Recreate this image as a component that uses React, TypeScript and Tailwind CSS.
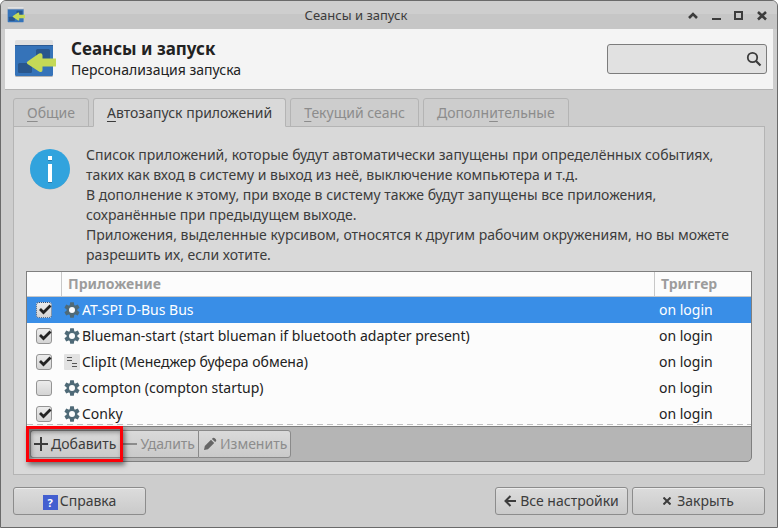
import clsx from "clsx"
import { useState } from "react"

type Entry = {
    name: string
    icon: "gear" | "list"
    enabled: boolean
    trigger: string
}

const initialEntries: Entry[] = [
    { name: "AT-SPI D-Bus Bus", icon: "gear", enabled: true, trigger: "on login" },
    { name: "Blueman-start (start blueman if bluetooth adapter present)", icon: "gear", enabled: true, trigger: "on login" },
    { name: "ClipIt (Менеджер буфера обмена)", icon: "list", enabled: true, trigger: "on login" },
    { name: "compton (compton startup)", icon: "gear", enabled: false, trigger: "on login" },
    { name: "Conky", icon: "gear", enabled: true, trigger: "on login" },
]

// [before, mnemonic, after]
const tabs = [
    ["", "О", "бщие"],
    ["", "А", "втозапуск приложений"],
    ["", "Т", "екущий сеанс"],
    ["Дополн", "и", "тельные"],
]

const SessionIcon = ({ className }: { className: string }) => (
    <svg viewBox="0 0 42 38" className={className} aria-hidden="true">
        <rect x="0" y="2" width="38" height="35" rx="1.5" fill="#b5b5b5" />
        <rect x="0" y="0" width="38" height="36" rx="1.5" fill="#e0e0e0" />
        <path d="M0 6h38v28.500a1.500 1.500 0 0 1-1.500 1.500h-35a1.500 1.500 0 0 1-1.500-1.500z" fill="#3573b9" />
        <path d="M0 5.500h38" stroke="#2b5a94" />
        <rect x="21" y="9" width="14" height="13" rx="1.500" fill="#29568c" />
        <rect x="3" y="23" width="14" height="10" rx="1.500" fill="#29568c" />
        <path d="M12.500 21.500 24 13.500q3.500-1 3.500 2v3H41v8H27.500v3.500q0 3-3.500 1.500L12.500 24q-1.500-1.200 0-2.500z" fill="#c5d957" />
    </svg>
)

const GearIcon = () => (
    <svg viewBox="0 0 16 16" className="size-4 shrink-0" aria-hidden="true">
        <g fill="#4f6a77">
            <path d="M6.200.3h3.600l.6 3.700v8l-.6 3.700H6.200L5.600 12V4z" />
            <path d="M6.200.3h3.600l.6 3.700v8l-.6 3.700H6.200L5.600 12V4z" transform="rotate(60 8 8)" />
            <path d="M6.200.3h3.600l.6 3.700v8l-.6 3.700H6.200L5.600 12V4z" transform="rotate(120 8 8)" />
            <circle cx="8" cy="8" r="5.300" />
        </g>
        <circle cx="8" cy="8" r="3" fill="#fcfcfc" />
    </svg>
)

const ListIcon = () => (
    <svg viewBox="0 0 16 16" className="size-4 shrink-0" aria-hidden="true">
        <rect width="16" height="16" rx="1" fill="#e2e2e2" />
        <path d="M3 3.500h5M3 6.500h5M8 9.500h5M8 12.500h5" stroke="#555" />
    </svg>
)

const InfoIcon = () => (
    <svg viewBox="0 0 40 41" className="h-[41px] w-10 shrink-0" aria-hidden="true">
        <circle cx="20" cy="21" r="19.500" fill="#8fa9b8" />
        <circle cx="20" cy="20" r="20" fill="#31a3dd" />
        <path d="M18 8h4v4h-4zM18 16h4v18h-4z" fill="#2a7cab" />
        <path d="M18 7h4v4h-4zM18 15h4v18h-4z" fill="#fff" />
    </svg>
)

const windowButtons = [
    { label: "Свернуть в заголовок", path: "M3 10 7 6l4 4", width: 2.6 },
    { label: "Свернуть", path: "M3 11h9", width: 2 },
    { label: "Развернуть", path: "M3 4h7v7H3z", width: 2 },
    { label: "Закрыть окно", path: "m3 4 8 7.500M11 4l-8 7.500", width: 2.6 },
]

const TitleBar = () => (
    <div className="flex h-7 items-center bg-linear-to-b from-[#cecece] from-45% to-[#c6c6c6] to-45% pr-2 pl-1.5">
        <SessionIcon className="h-4 w-[19px]" />
        <div className="flex-1 text-center text-[13px] leading-5 text-[#3c3c3c]">Сеансы и запуск</div>
        <div className="flex gap-[9px]">
            {windowButtons.map((b) => (
                <button key={b.label} type="button" aria-label={b.label} className="size-3.5">
                    <svg viewBox="0 0 14 14" className="size-3.5" fill="none" stroke="#3c3c3c" strokeWidth={b.width}>
                        <path d={b.path} />
                    </svg>
                </button>
            ))}
        </div>
    </div>
)

const Header = () => (
    <header className="mx-1 flex items-center border-b border-[#b4b4b4] bg-[#f4f4f4] py-[9px] pr-1.5 pl-2.5">
        <SessionIcon className="h-[38px] w-[42px]" />
        <div className="flex-1 pl-3.5 text-[#222]">
            <h1 className="text-[17px] leading-[22px] font-bold">Сеансы и запуск</h1>
            <p className="leading-5">Персонализация запуска</p>
        </div>
        <div className="relative w-40">
            <input
                type="search"
                aria-label="Поиск"
                className="block h-[30px] w-full rounded-[3px] border border-[#7c7c7c] bg-[#e1e1e1] pr-7 pl-2 outline-none"
            />
            <svg viewBox="0 0 16 16" className="pointer-events-none absolute top-[7px] right-[5px] size-4" fill="none" stroke="#3c3c3c" aria-hidden="true">
                <circle cx="6.500" cy="6.500" r="4.700" strokeWidth="1.800" />
                <path d="m10 10 4.500 4.500" strokeWidth="2.200" />
            </svg>
        </div>
    </header>
)

const CheckBox = ({ label, checked, focused, onChange }: { label: string; checked: boolean; focused: boolean; onChange: () => void }) => (
    <span className="relative block size-4">
        <input
            type="checkbox"
            aria-label={label}
            checked={checked}
            onChange={onChange}
            className={clsx(
                "block size-4 appearance-none rounded-[3px] border bg-linear-to-b from-[#ececec] to-[#d4d4d4]",
                focused ? "border-dotted border-[#2b4f7d]" : "border-[#949494]"
            )}
        />
        {checked && (
            <svg viewBox="0 0 16 16" className="pointer-events-none absolute inset-0 size-4" aria-hidden="true">
                <path d="m4 7 3.500 3.500 7-7" fill="none" stroke="#222" strokeWidth="2.800" />
            </svg>
        )}
    </span>
)

const EntryTable = () => {
    const [entries, setEntries] = useState(initialEntries)
    const [selected, setSelected] = useState(0)

    const toggle = (index: number) =>
        setEntries(entries.map((e, i) => (i === index ? { ...e, enabled: !e.enabled } : e)))

    return (
        <div className="relative border border-b-0 border-[#7f7f7f] bg-[#fcfcfc]">
            <table className="w-full table-fixed border-separate border-spacing-0 text-left text-[#222]">
                <colgroup>
                    <col className="w-[35px]" />
                    <col />
                    <col className="w-24" />
                </colgroup>
                <thead>
                    <tr className="h-[25px] text-[#9c9c9c]">
                        <th aria-label="Включено" className="border-r border-b border-[#c8c8c8] p-0"></th>
                        <th className="border-r border-b border-[#c8c8c8] p-0 pl-1.5 leading-5 font-bold">Приложение</th>
                        <th className="border-b border-[#c8c8c8] p-0 pl-1.5 leading-5 font-bold">Триггер</th>
                    </tr>
                </thead>
                <tbody>
                    {entries.map((entry, i) => (
                        <tr key={entry.name} className={clsx("h-[26px]", i === selected && "bg-[#398ee7] text-white")} onClick={() => setSelected(i)}>
                            <td className="p-0 pl-[9px]">
                                <CheckBox label={entry.name} checked={entry.enabled} focused={i === selected} onChange={() => toggle(i)} />
                            </td>
                            <td className="p-0 pl-0.5">
                                <div className="flex items-center gap-0.5 leading-5 whitespace-nowrap">
                                    {entry.icon === "gear" ? <GearIcon /> : <ListIcon />}
                                    {entry.name}
                                </div>
                            </td>
                            <td className="p-0 pl-1 leading-5">{entry.trigger}</td>
                        </tr>
                    ))}
                </tbody>
            </table>
            <div className="pointer-events-none absolute inset-x-0 bottom-0.5 h-px bg-[repeating-linear-gradient(to_right,#c0c0c0_0_6px,transparent_6px_10px)]" />
        </div>
    )
}

const toolButton = "flex h-7 items-center gap-[3px] border border-[#8a8a8a] bg-linear-to-b from-[#dadada] to-[#cacaca] pr-[3px] leading-5"

const Toolbar = () => (
    <div className="relative -mt-px flex rounded-b-[5px] border border-[#7f7f7f] bg-[#b5b5b5] p-[3px]">
        <div className="relative">
            <button type="button" className={clsx(toolButton, "rounded-l-[3px] border-r-0 pl-[3px] text-[#3c3c3c]")}>
                <svg viewBox="0 0 14 14" className="size-3.5" stroke="currentColor" strokeWidth="2" aria-hidden="true">
                    <path d="M0 7h14M7 0v14" />
                </svg>
                Добавить
            </button>
            {/* callout around the add button */}
            <div className="pointer-events-none absolute -inset-x-1 -inset-y-1 border-3 border-[#fb0007] shadow-[2px_3px_5px_rgba(0,0,0,0.5),inset_2px_3px_5px_rgba(0,0,0,0.4)]" />
        </div>
        <button type="button" disabled className={clsx(toolButton, "border-x-0 pl-1 text-[#8c8c8c]")}>
            <svg viewBox="0 0 14 14" className="size-3.5" stroke="currentColor" strokeWidth="2" aria-hidden="true">
                <path d="M0 7h14" />
            </svg>
            Удалить
        </button>
        <button type="button" disabled className={clsx(toolButton, "rounded-r-[3px] pl-1 text-[#8c8c8c]")}>
            <svg viewBox="0 0 14 14" className="size-3.5" fill="#666" aria-hidden="true">
                <path d="M1 13l.8-4L8 2.800 11.200 6 5 12.200zM8.900 1.900l.9-.9q1-.7 2 .2l1 1q.9 1 .2 2l-.9.9z" />
            </svg>
            Изменить
        </button>
    </div>
)

const footerButton =
    "flex h-7 w-[133px] items-center justify-center rounded-[3px] border border-[#8c8c8c] bg-linear-to-b from-[#dcdcdc] to-[#cacaca] leading-5 text-[#3c3c3c] shadow-[inset_0_1px_0_#ececec]"

const Footer = () => (
    <footer className="mt-3 flex gap-1">
        <button type="button" className={clsx(footerButton, "mr-auto gap-0.5")}>
            <span className="mt-0.5 size-[15px] bg-[#435fd0] text-center text-[11px] leading-[15px] font-bold text-white" aria-hidden="true">?</span>
            Справка
        </button>
        <button type="button" className={clsx(footerButton, "gap-1")}>
            <svg viewBox="0 0 12 12" className="size-3" fill="none" stroke="currentColor" strokeWidth="2" aria-hidden="true">
                <path d="M1 6h11M6.500 1 1.500 6l5 5" />
            </svg>
            Все настройки
        </button>
        <button type="button" className={clsx(footerButton, "gap-1.5")}>
            <svg viewBox="0 0 8 8" className="size-2" fill="none" stroke="currentColor" strokeWidth="2" aria-hidden="true">
                <path d="m.5.5 7 7M7.500.5l-7 7" />
            </svg>
            Закрыть
        </button>
    </footer>
)

export default function App() {
    const [active, setActive] = useState(1)

    return (
        <div className="min-h-screen bg-white font-['Noto_Sans','Open_Sans',sans-serif] text-sm">
            <div className="flex min-h-screen flex-col overflow-hidden rounded-t-md border border-[#6a6a6a] bg-[#cdcdcd]">
                <TitleBar />
                <Header />
                <main className="px-3 pt-2 pb-3">
                    <div role="tablist" className="relative -mb-px flex gap-1">
                        {tabs.map(([before, key, after], i) => (
                            <button
                                key={before + key + after}
                                type="button"
                                role="tab"
                                aria-selected={i === active}
                                onClick={() => setActive(i)}
                                className={clsx(
                                    "h-[29px] rounded-t-[3px] border border-[#b4b4b4] px-[13px] leading-5",
                                    i === active ? "border-b-[#d9d9d9] bg-[#d9d9d9] text-[#3c3c3c]" : "text-[#8c8c8c]"
                                )}
                            >
                                {before}<u className="underline-offset-3">{key}</u>{after}
                            </button>
                        ))}
                    </div>
                    <section role="tabpanel" className="border border-[#b4b4b4] bg-[#d9d9d9] px-3 pt-[18px] pb-3">
                        <div className="mb-1.5 flex gap-4 px-1">
                            <div className="pt-1"><InfoIcon /></div>
                            <div className="leading-5 text-[#3c3c3c]">
                                <p>Список приложений, которые будут автоматически запущены при определённых событиях, таких как вход в систему и выход из неё, выключение компьютера и т.д.</p>
                                <p>В дополнение к этому, при входе в систему также будут запущены все приложения, сохранённые при предыдущем выходе.</p>
                                <p>Приложения, выделенные курсивом, относятся к другим рабочим окружениям, но вы можете разрешить их, если хотите.</p>
                            </div>
                        </div>
                        <EntryTable />
                        <Toolbar />
                    </section>
                    <Footer />
                </main>
            </div>
        </div>
    )
}
